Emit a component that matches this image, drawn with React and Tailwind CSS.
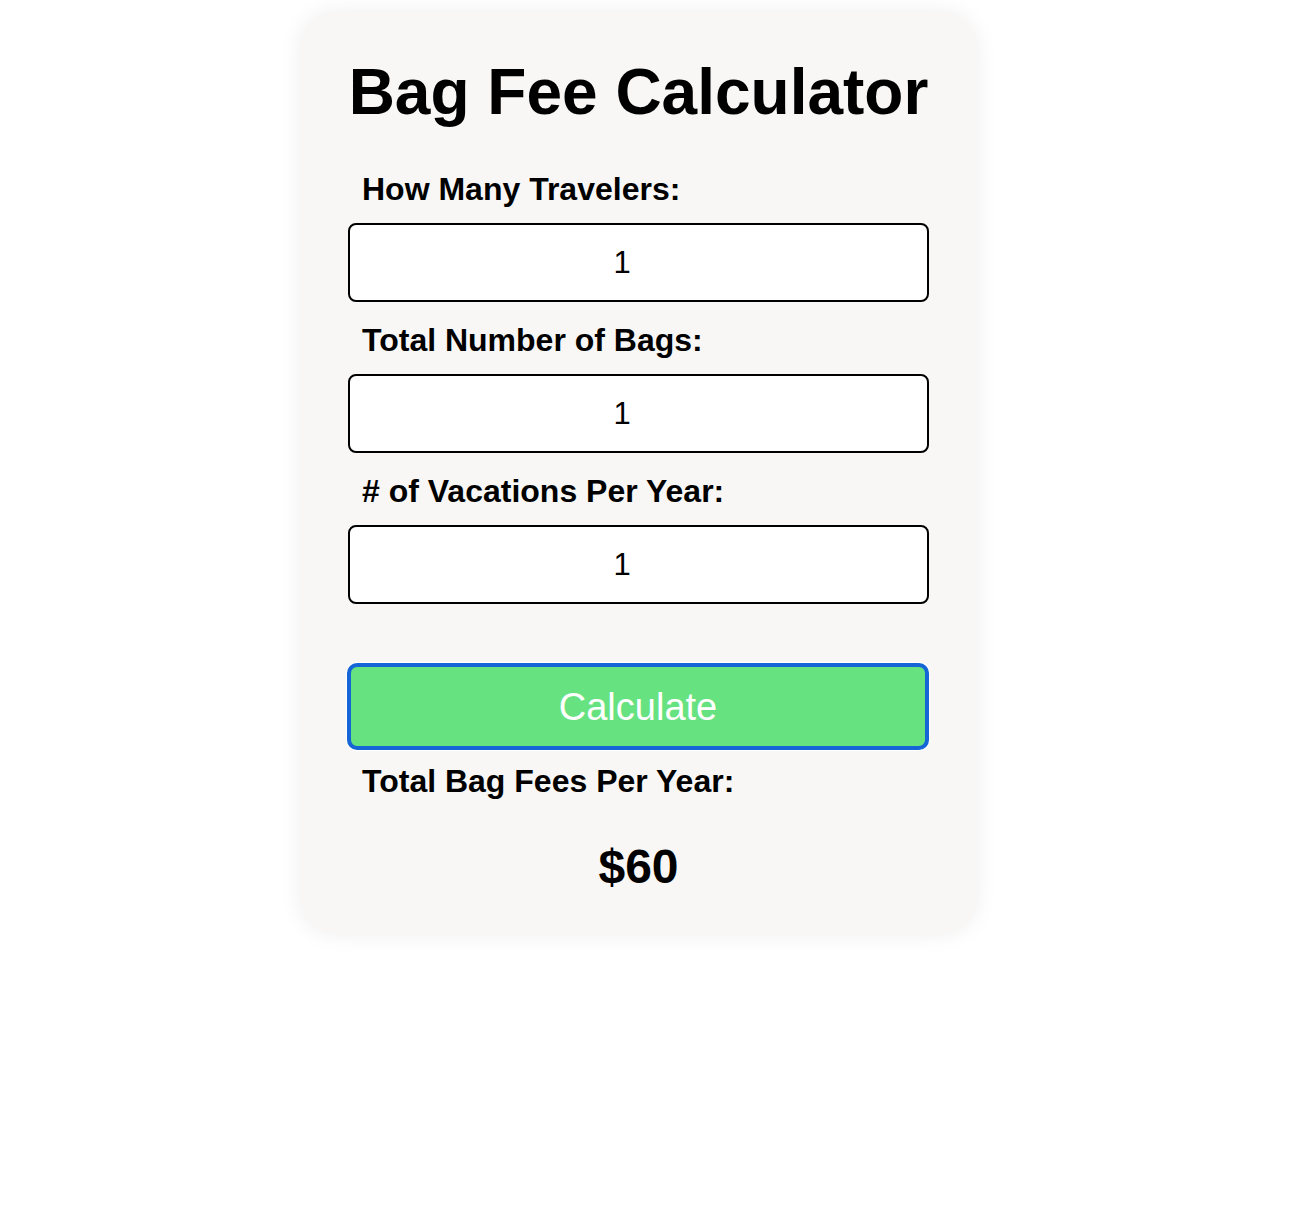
import React, { useState } from 'react';

const font = { fontFamily: '"Liberation Sans", Arial, Helvetica, sans-serif' };

function Field({ label, value, onChange, first }) {
  return (
    <div className={first ? '' : 'mt-[22px]'}>
      <label className="block ml-[14px] text-[32px] leading-none font-bold text-black">{label}</label>
      <input
        type="number"
        value={value}
        onChange={e => onChange(e.target.value)}
        className="mt-[18px] block w-full h-[79px] rounded-[8px] border-2 border-black bg-white pr-[18px] text-center text-[31px] text-black outline-none"
        style={font}
      />
    </div>
  );
}

export default function App() {
  const [travelers, setTravelers] = useState('1');
  const [bags, setBags] = useState('1');
  const [trips, setTrips] = useState('1');
  const [total, setTotal] = useState(60);

  const calc = () => {
    const b = Number(bags) || 0;
    const v = Number(trips) || 0;
    // $30 each way per bag
    setTotal(b * v * 60);
  };

  return (
    <div className="min-h-screen bg-white pt-[12px] pr-[33px] flex justify-center items-start" style={font}>
      <div className="w-[677px] rounded-[36px] bg-[#f8f7f6] shadow-[0_0_22px_rgba(0,0,0,0.07)] px-[48px] pt-[48px] pb-[43px]">
        <h1 className="text-center text-[64px] leading-none font-bold text-black">Bag Fee Calculator</h1>

        <div className="mt-[49px]">
          <Field first label="How Many Travelers:" value={travelers} onChange={setTravelers} />
          <Field label="Total Number of Bags:" value={bags} onChange={setBags} />
          <Field label="# of Vacations Per Year:" value={trips} onChange={setTrips} />
        </div>

        <button
          onClick={calc}
          className="mt-[59px] block w-[582px] -mx-px h-[87px] rounded-[10px] border-4 border-[#1565d6] bg-[#67e281] text-white text-[38px] leading-none shadow-[0_0_0_1px_#ffffff]"
          style={font}
        >
          Calculate
        </button>

        <div className="mt-[15px] ml-[14px] text-[32px] leading-none font-bold text-black">Total Bag Fees Per Year:</div>
        <div className="mt-[46px] text-center text-[48px] leading-none font-bold text-black">${total}</div>
      </div>
    </div>
  );
}
